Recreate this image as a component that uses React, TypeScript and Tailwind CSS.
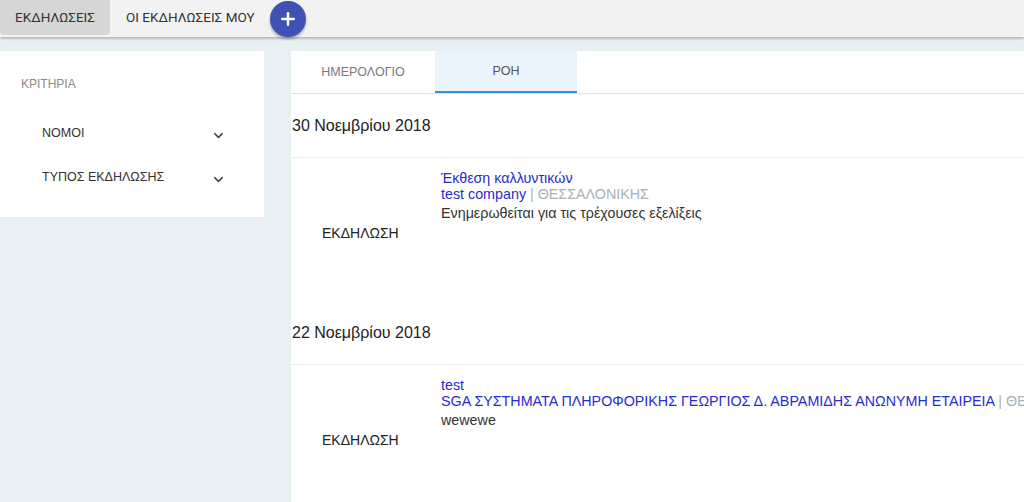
import { ChevronDown, Plus } from "lucide-react";

const events = [
  {
    date: "30 Νοεμβρίου 2018",
    title: "Έκθεση καλλυντικών",
    company: "test company",
    place: "ΘΕΣΣΑΛΟΝΙΚΗΣ",
    text: "Ενημερωθείται για τις τρέχουσες εξελίξεις",
  },
  {
    date: "22 Νοεμβρίου 2018",
    title: "test",
    company: "SGA ΣΥΣΤΗΜΑΤΑ ΠΛΗΡΟΦΟΡΙΚΗΣ ΓΕΩΡΓΙΟΣ Δ. ΑΒΡΑΜΙΔΗΣ ΑΝΩΝΥΜΗ ΕΤΑΙΡΕΙΑ",
    place: "ΘΕΣΣΑΛΟΝΙΚΗΣ",
    text: "wewewe",
  },
];

const filters = ["ΝΟΜΟΙ", "ΤΥΠΟΣ ΕΚΔΗΛΩΣΗΣ"];

const App = () => {
  return (
    <div className="h-[502px] w-[1024px] overflow-hidden bg-[#e9f0f4] font-['Liberation_Sans',Arial,sans-serif]">
      <nav className="relative z-10 flex h-[37px] items-start bg-[#f2f2f2] shadow-[0_2px_2px_rgba(0,0,0,0.22)] font-['Roboto',sans-serif] text-[13.5px] text-[#333]">
        <button
          type="button"
          className="flex h-[35px] w-[110px] items-center justify-center rounded-b-[4px] bg-[#d6d6d6]"
        >
          ΕΚΔΗΛΩΣΕΙΣ
        </button>
        <button type="button" className="flex h-[35px] items-center pl-[16px] pr-[15px]">
          ΟΙ ΕΚΔΗΛΩΣΕΙΣ ΜΟΥ
        </button>
        <button
          type="button"
          className="mt-[1px] flex h-[36px] w-[36px] items-center justify-center rounded-full bg-[#3f51b5] text-white shadow-[0_2px_3px_rgba(0,0,0,0.3)]"
        >
          <Plus size={20} strokeWidth={3} />
        </button>
      </nav>

      <div className="mt-[14px] flex items-start gap-[27px]">
        <aside className="flex h-[166px] w-[264px] shrink-0 flex-col bg-white pl-[21px]">
          <div className="mt-[24px] text-[12px] text-[#8a8a8a]">ΚΡΙΤΗΡΙΑ</div>
          <div className="mt-[30px] flex flex-col gap-[24px] pl-[21px] pr-[38px]">
            {filters.map((f) => (
              <div key={f} className="flex items-center justify-between">
                <span className="text-[12.5px] text-[#333]">{f}</span>
                <ChevronDown size={15} strokeWidth={2.4} className="mt-[5px] text-[#444]" />
              </div>
            ))}
          </div>
        </aside>

        <main className="h-[451px] min-w-0 flex-1 overflow-hidden bg-white">
          <div className="flex h-[43px] border-b border-[#e2e2e2]">
            <div className="flex w-[144px] items-center justify-center text-[12.5px] text-[#7a7a7a]">
              ΗΜΕΡΟΛΟΓΙΟ
            </div>
            <div className="flex w-[142px] items-center justify-center border-b-2 border-[#3a8ddb] bg-[#e9f4fd] text-[12.5px] text-[#555]">
              ΡΟΗ
            </div>
          </div>

          {events.map((e) => (
            <section key={e.date}>
              <div className="flex h-[64px] items-center border-b border-[#eeeeee] pl-[1px] pt-[1px] text-[16px] text-[#222]">
                {e.date}
              </div>
              <div className="flex h-[143px]">
                <div className="w-[150px] shrink-0 pl-[31px] pt-[67px] text-[14px] leading-[16px] text-[#222]">
                  ΕΚΔΗΛΩΣΗ
                </div>
                <div className="whitespace-nowrap pt-[12px] text-[14.3px] leading-[16px]">
                  <div className="text-[#2a2ad2]">{e.title}</div>
                  <div>
                    <span className="text-[#2a2ad2]">{e.company}</span>
                    <span className="text-[#a8b0b8]"> | {e.place}</span>
                  </div>
                  <div className="mt-[1px] leading-[20px] text-[#333]">{e.text}</div>
                </div>
              </div>
            </section>
          ))}
        </main>
      </div>
    </div>
  );
};

export default App;
